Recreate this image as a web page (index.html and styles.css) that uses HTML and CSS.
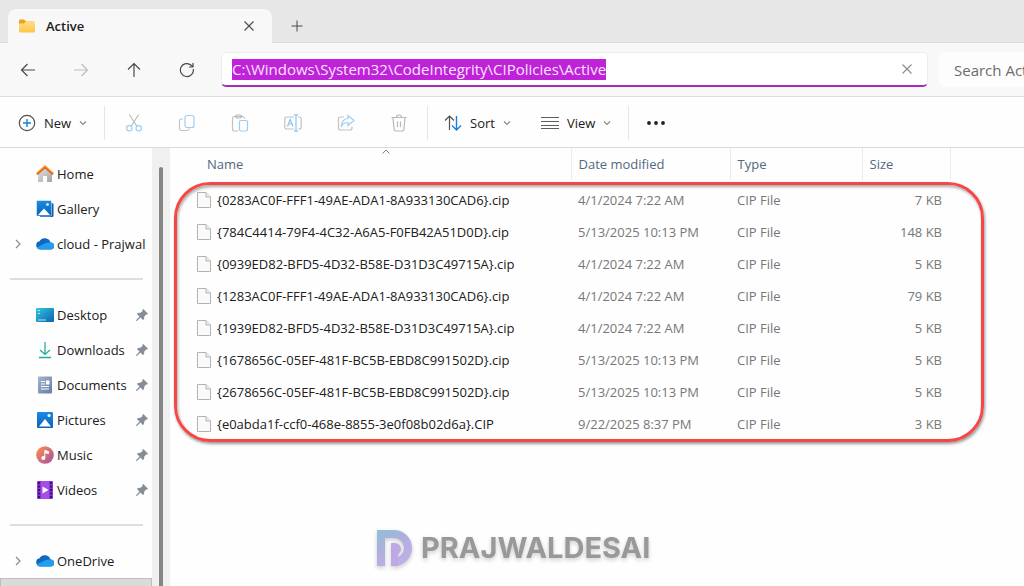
FILE: index.html
```html
<!DOCTYPE html>
<html lang="en">
<head>
<meta charset="utf-8">
<title>Active</title>
<link rel="stylesheet" href="styles.css">
</head>
<body>
<svg class="defs" aria-hidden="true">
  <defs>
    <linearGradient id="cloudA" x1="0" y1="0" x2="1" y2="1"><stop offset="0" stop-color="#0d5bb5"/><stop offset="1" stop-color="#1580d8"/></linearGradient>
    <linearGradient id="pic" x1="0" y1="0" x2="0" y2="1"><stop offset="0" stop-color="#1a8be6"/><stop offset="1" stop-color="#0a62b8"/></linearGradient>
    <linearGradient id="desk" x1="0" y1="0" x2="1" y2="1"><stop offset="0" stop-color="#35c6dc"/><stop offset="1" stop-color="#0b62b4"/></linearGradient>
    <linearGradient id="doc" x1="0" y1="0" x2="1" y2="1"><stop offset="0" stop-color="#a3b5cf"/><stop offset="1" stop-color="#647ca3"/></linearGradient>
    <linearGradient id="mus" x1="0" y1="0" x2="1" y2="1"><stop offset="0.2" stop-color="#ee8457"/><stop offset="1" stop-color="#a64fa8"/></linearGradient>
    <linearGradient id="house" x1="0" y1="0" x2="1" y2="1"><stop offset="0" stop-color="#e6e6e6"/><stop offset="1" stop-color="#a2a2a2"/></linearGradient>
    <linearGradient id="fold" x1="0" y1="0" x2="0" y2="1"><stop offset="0" stop-color="#ffdf83"/><stop offset="1" stop-color="#fcc648"/></linearGradient>
    <linearGradient id="brand" x1="0" y1="0" x2="0.6" y2="1"><stop offset="0" stop-color="#8fc0d6"/><stop offset="0.5" stop-color="#b0aedd"/><stop offset="1" stop-color="#c2aeea"/></linearGradient>
  </defs>
  <symbol id="i-chev" viewBox="0 0 8 8"><path d="M1 2.5 4 5.5 7 2.5" fill="none" stroke="#8a8a8a"/></symbol>
  <symbol id="i-x" viewBox="0 0 12 12"><path d="M1.500 1.500 10.500 10.500M10.500 1.500 1.500 10.500" fill="none" stroke="currentColor" stroke-width="1.100"/></symbol>
  <symbol id="i-right" viewBox="0 0 8 10"><path d="M2 1 6 5 2 9" fill="none" stroke="#8c8c8c" stroke-width="1.200"/></symbol>
  <symbol id="i-cloud" viewBox="0 0 18 18"><path d="M4.500 14.500A4.200 4.200 0 0 1 3.500 6.200 6 6 0 0 1 14.500 7.500 3.500 3.500 0 0 1 15 14.500Z" fill="url(#cloudA)"/><path d="M.8 12.500 9.500 8.300Q12 7.300 14.500 7.500A3.500 3.500 0 0 1 14.800 14.500H4.500Q2 14.500 .8 12.500Z" fill="#259ded"/></symbol>
  <symbol id="i-pin" viewBox="0 0 12 12"><path d="M7.300 0 12 4.700 11.200 5.600 10.100 5.500 8.300 7.500 8 10.200 6.900 11 4.500 8.500 1.100 11.800 0 12 .2 10.900 3.500 7.500 1 5 1.800 3.900 4.500 3.700 6.500 1.900 6.400 .8Z" fill="#858e97"/></symbol>
  <symbol id="i-file" viewBox="0 0 14 18"><path d="M.5 1.500H9L13.500 6V16.500H.5Z" fill="#fafafa" stroke="#b2b2b2"/><path d="M9 1.500V6H13.500" fill="#eee" stroke="#b2b2b2"/></symbol>
</svg>

<div class="window">
  <header class="tabs">
    <div class="tab">
      <svg class="tab-icon" viewBox="0 0 18 14"><path d="M1 2Q1 .5 2 .5H6L8 2.500H15V6H1Z" fill="#f0a11c"/><path d="M1 4.500H6L8 2.500H16Q17 2.500 17 3.500V12.500Q17 13.500 16 13.500H2Q1 13.500 1 12.500Z" fill="url(#fold)"/></svg>
      <span class="tab-title">Active</span>
      <button class="plain" aria-label="Close tab"><svg class="s12"><use href="#i-x"/></svg></button>
    </div>
    <button class="plain add" aria-label="New tab"><svg class="s12" viewBox="0 0 12 12"><path d="M6 .5V11.500M.5 6H11.500" stroke="#4a4a4a" fill="none"/></svg></button>
  </header>

  <nav class="navbar">
    <div class="nav-buttons">
      <button class="plain" aria-label="Back"><svg class="s16" viewBox="0 0 16 16"><path d="M15 8H1.500M7.500 2 1.500 8 7.500 14"/></svg></button>
      <button class="plain" aria-label="Forward" disabled><svg class="s16" viewBox="0 0 16 16"><path d="M1 8H14.500M8.500 2 14.500 8 8.500 14"/></svg></button>
      <button class="plain" aria-label="Up"><svg class="s16" viewBox="0 0 16 16"><path d="M8 15V1.500M2 7.500 8 1.500 14 7.500"/></svg></button>
      <button class="plain" aria-label="Refresh"><svg class="s16" viewBox="0 0 16 16"><path d="M14.300 7A6.500 6.500 0 1 1 12.200 3.200L14 5M14 1V5H10"/></svg></button>
    </div>
    <div class="address">
      <input class="path" type="text" aria-label="Address" value="C:\Windows\System32\CodeIntegrity\CIPolicies\Active">
      <button class="plain clear" aria-label="Clear"><svg class="s12"><use href="#i-x"/></svg></button>
    </div>
    <input class="search" type="text" aria-label="Search" placeholder="Search Active">
  </nav>

  <div class="toolbar">
    <button class="tool new"><svg class="s18" viewBox="0 0 18 18"><circle cx="9" cy="9" r="7.700" stroke="#505050"/><path d="M9 5V13M5 9H13" stroke="#1780d6" stroke-width="1.400"/></svg>New<svg class="s8"><use href="#i-chev"/></svg></button>
    <div class="icon-tools">
      <button class="plain" aria-label="Cut"><svg class="s18" viewBox="0 0 18 18"><path d="M4.300.5 12 12.500M13.700.5 6 12.500" stroke="#bcbcbc"/><circle cx="4.300" cy="14.300" r="2.700" stroke="#9ccdf2"/><circle cx="13.700" cy="14.300" r="2.700" stroke="#9ccdf2"/></svg></button>
      <button class="plain" aria-label="Copy"><svg class="s18" viewBox="0 0 18 18"><path d="M5 5H3.500Q1.500 5 1.500 7V14Q1.500 16.500 4 16.500H9Q11 16.500 11.500 14.500" stroke="#c6c6c6"/><rect x="7" y="1.500" width="9" height="12" rx="2" stroke="#9ccdf2"/></svg></button>
      <button class="plain" aria-label="Paste"><svg class="s18" viewBox="0 0 18 18"><path d="M7 17H3.500Q1.500 17 1.500 15V4Q1.500 2.500 3.500 2.500H11.500Q13.500 2.500 13.500 4.500" stroke="#c2c2c2"/><rect x="4.500" y="1" width="6" height="3" rx="1.500" stroke="#b5b5b5"/><rect x="8.500" y="6.500" width="8" height="10.500" rx="1.500" stroke="#9ccdf2"/></svg></button>
      <button class="plain" aria-label="Rename"><svg class="s18" viewBox="0 0 18 18"><path d="M10 15H3Q.8 15 .8 13V5Q.8 3 3 3H10M14 3H15Q17.200 3 17.200 5V13Q17.200 15 15 15H14" stroke="#c2c2c2"/><path d="M12 .8V17.200M10 .8H14M10 17.200H14M3.500 12.500 6.200 5.500 9 12.500M4.500 10H8" stroke="#8fc4ee"/></svg></button>
      <button class="plain" aria-label="Share"><svg class="s18" viewBox="0 0 18 18"><path d="M7 3H3.500Q1.500 3 1.500 5V14Q1.500 16 3.500 16H13Q15 16 15 14V12.500" stroke="#c2c2c2"/><path d="M11 1.500 17 6.500 11 11.500V8.500Q7 8.500 4.500 12Q5 5 11 4.500Z" stroke="#9ccdf2"/></svg></button>
      <button class="plain" aria-label="Delete"><svg class="s18" viewBox="0 0 18 18"><path d="M1.500 3.500H16.500M6.500 3Q6.500 1 9 1T11.500 3M3 3.500 4 15Q4.200 17 6 17H12Q13.800 17 14 15L15 3.500M7.500 7.500V13M10.500 7.500V13" stroke="#b8b8b8"/></svg></button>
    </div>
    <div class="view-tools">
      <button class="tool"><svg class="s18" viewBox="0 0 18 18"><path d="M5.500 16V2M1 6.500 5.500 2 10 6.500" stroke="#505050"/><path d="M12.500 2V16M8 11.500 12.500 16 17 11.500" stroke="#1780d6" stroke-width="1.400"/></svg>Sort<svg class="s8"><use href="#i-chev"/></svg></button>
      <button class="tool"><svg class="s18" viewBox="0 0 18 18"><path d="M0 3.500H18M0 7.500H18M0 11.500H18M0 14.500H18" stroke="#5c5c5c"/></svg>View<svg class="s8"><use href="#i-chev"/></svg></button>
    </div>
    <button class="plain more" aria-label="See more"><svg class="s18" viewBox="0 0 18 18"><g fill="#222"><circle cx="2" cy="9" r="1.900"/><circle cx="9" cy="9" r="1.900"/><circle cx="16" cy="9" r="1.900"/></g></svg></button>
  </div>

  <div class="body">
    <aside class="side">
      <div class="side-list">
        <a class="item" href="#"><span></span><svg class="s18" viewBox="0 0 18 18"><path d="M2 8.500 9 2.500 16 8.500V17H11V11H7V17H2Z" fill="url(#house)"/><path d="M.8 9 9 1.500 17.200 9" fill="none" stroke="#f5a623" stroke-width="2.400"/><path d="M1.200 9.600 9 2.600 16.800 9.600" fill="none" stroke="#e4502c" stroke-width="1.300"/></svg>Home</a>
        <a class="item" href="#"><span></span><svg class="s18" viewBox="0 0 18 18"><path d="M4 3H16Q17.500 3 17.500 4.500V15.500Q17.500 17 16 17H4Z" fill="#0b5cad"/><rect x=".5" y=".5" width="15" height="15.500" rx="1" fill="url(#pic)" stroke="#fff" stroke-width=".5"/><path d="M2 15 8 8.500 14 15Z" fill="#fff"/><circle cx="11.500" cy="4.500" r="1.300" fill="#fff"/></svg>Gallery</a>
        <a class="item" href="#"><svg class="arrow"><use href="#i-right"/></svg><svg class="s18"><use href="#i-cloud"/></svg>cloud - Prajwal</a>
        <hr>
        <a class="item" href="#"><span></span><svg class="s18" viewBox="0 0 18 18"><rect y="2" width="18" height="14" rx="1" fill="url(#desk)"/><path d="M2 4.500H4M2 7.500H4M2 14H10" stroke="#a6eef5"/></svg>Desktop<svg class="pin"><use href="#i-pin"/></svg></a>
        <a class="item" href="#"><span></span><svg class="s18" viewBox="0 0 18 18"><path d="M9 1V13.500M4 9 9 13.500 14 9M3 16.500H15" fill="none" stroke="#24ac94" stroke-width="1.300"/></svg>Downloads<svg class="pin"><use href="#i-pin"/></svg></a>
        <a class="item" href="#"><span></span><svg class="s18" viewBox="0 0 18 18"><rect x="2" y=".5" width="14" height="17" rx="1" fill="url(#doc)"/><path d="M5 5.500H9M5 8H9M5 10.500H13M5 13H13" stroke="#fff"/><rect x="10" y="4.500" width="3.500" height="4" fill="#fff"/></svg>Documents<svg class="pin"><use href="#i-pin"/></svg></a>
        <a class="item" href="#"><span></span><svg class="s18" viewBox="0 0 18 18"><rect x="1" y="1" width="16" height="16" rx="1" fill="url(#pic)"/><path d="M3 15.500 9 8 15 15.500Z" fill="#fff"/><circle cx="13" cy="4.500" r="1.500" fill="#fff"/></svg>Pictures<svg class="pin"><use href="#i-pin"/></svg></a>
        <a class="item" href="#"><span></span><svg class="s18" viewBox="0 0 18 18"><circle cx="9" cy="9" r="8.800" fill="url(#mus)"/><circle cx="7.300" cy="12" r="2" fill="#fff"/><path d="M8.800 12V4.500L12.500 5.500V7.500L9 6.700" fill="#fff" stroke="#fff"/></svg>Music<svg class="pin"><use href="#i-pin"/></svg></a>
        <a class="item" href="#"><span></span><svg class="s18" viewBox="0 0 18 18"><rect x="1" width="16" height="18" rx="1" fill="#8b35d6"/><path d="M3 1V18M15 1V18" stroke="#38146b" stroke-width="2" stroke-dasharray="2 1.500"/><rect x="5" width="8" height="18" fill="#a44fe8"/><path d="M6.500 5.500 12.500 9 6.500 12.500Z" fill="#fff"/></svg>Videos<svg class="pin"><use href="#i-pin"/></svg></a>
        <hr>
        <a class="item" href="#"><svg class="arrow"><use href="#i-right"/></svg><svg class="s18"><use href="#i-cloud"/></svg>OneDrive</a>
        <div class="side-foot"></div>
      </div>
      <div class="gutter"><div class="thumb"></div></div>
    </aside>

    <main class="main">
      <div class="list">
        <table>
          <colgroup><col class="c-name"><col class="c-date"><col class="c-type"><col class="c-size"></colgroup>
          <thead><tr><th class="name">Name<svg class="sorted" viewBox="0 0 8 5"><path d="M.5 4.500 4 1 7.500 4.500" fill="none" stroke="#808080"/></svg></th><th>Date modified</th><th>Type</th><th>Size</th></tr></thead>
          <tbody>
            <tr><td class="name"><div class="file"><svg><use href="#i-file"/></svg>{0283AC0F-FFF1-49AE-ADA1-8A933130CAD6}.cip</div></td><td>4/1/2024 7:22 AM</td><td>CIP File</td><td class="size">7 KB</td></tr>
            <tr><td class="name"><div class="file"><svg><use href="#i-file"/></svg>{784C4414-79F4-4C32-A6A5-F0FB42A51D0D}.cip</div></td><td>5/13/2025 10:13 PM</td><td>CIP File</td><td class="size">148 KB</td></tr>
            <tr><td class="name"><div class="file"><svg><use href="#i-file"/></svg>{0939ED82-BFD5-4D32-B58E-D31D3C49715A}.cip</div></td><td>4/1/2024 7:22 AM</td><td>CIP File</td><td class="size">5 KB</td></tr>
            <tr><td class="name"><div class="file"><svg><use href="#i-file"/></svg>{1283AC0F-FFF1-49AE-ADA1-8A933130CAD6}.cip</div></td><td>4/1/2024 7:22 AM</td><td>CIP File</td><td class="size">79 KB</td></tr>
            <tr><td class="name"><div class="file"><svg><use href="#i-file"/></svg>{1939ED82-BFD5-4D32-B58E-D31D3C49715A}.cip</div></td><td>4/1/2024 7:22 AM</td><td>CIP File</td><td class="size">5 KB</td></tr>
            <tr><td class="name"><div class="file"><svg><use href="#i-file"/></svg>{1678656C-05EF-481F-BC5B-EBD8C991502D}.cip</div></td><td>5/13/2025 10:13 PM</td><td>CIP File</td><td class="size">5 KB</td></tr>
            <tr><td class="name"><div class="file"><svg><use href="#i-file"/></svg>{2678656C-05EF-481F-BC5B-EBD8C991502D}.cip</div></td><td>5/13/2025 10:13 PM</td><td>CIP File</td><td class="size">5 KB</td></tr>
            <tr><td class="name"><div class="file"><svg><use href="#i-file"/></svg>{e0abda1f-ccf0-468e-8855-3e0f08b02d6a}.CIP</div></td><td>9/22/2025 8:37 PM</td><td>CIP File</td><td class="size">3 KB</td></tr>
          </tbody>
        </table>
        <div class="highlight"></div>
      </div>
      <div class="brand">
        <svg viewBox="0 0 36 36"><path d="M0 0H17A18 18 0 0 1 17 36H14V28H17A10 10 0 0 0 17 8H8V36H0Z" fill="url(#brand)"/><path d="M14 13H18A6 6 0 0 1 18 25H14Z" fill="#bda9e3"/><path d="M14 22H21V36H14Z" fill="#bda9e3"/></svg>
        <span>PRAJWALDESAI</span>
      </div>
    </main>
  </div>
</div>
</body>
</html>
```
FILE: styles.css
```css
* { box-sizing: border-box; }
body {
  margin: 0;
  background: #fefefe;
  color: #202020;
  font-family: "Open Sans", "Noto Sans", sans-serif;
  font-size: 13px;
}
svg { flex: none; display: block; }
button, input { font: inherit; color: inherit; }
.defs { position: absolute; width: 0; height: 0; }
.window { display: flex; flex-direction: column; height: 100vh; overflow: hidden; }
.plain {
  display: flex; align-items: center; justify-content: center;
  padding: 0; border: 0; background: none; color: #4a4a4a;
}
.s8 { width: 8px; height: 8px; }
.s12 { width: 12px; height: 12px; }
.s16 { width: 16px; height: 16px; }
.s18 { width: 18px; height: 18px; }

.tabs {
  display: flex; flex: none; align-items: flex-end; height: 43px; padding-left: 8px;
  background: #e7e7e7; border-bottom: 1px solid #dcdcdc;
}
.tab {
  display: flex; align-items: center; width: 264px; height: 34px;
  margin-bottom: -1px; padding: 0 17px 0 10px;
  background: #f8f8f8; border-radius: 8px 8px 0 0;
}
.tab-icon { width: 18px; height: 14px; }
.tab-title { flex: 1; margin-left: 10px; font-weight: 600; }
.add { width: 50px; height: 32px; }

.navbar {
  display: flex; flex: none; align-items: center; height: 54px;
  background: #f8f8f8; border-bottom: 1px solid #dddddd;
}
.nav-buttons { display: flex; padding-left: 1px; width: 221px; }
.nav-buttons .plain { width: 53px; height: 32px; }
.nav-buttons svg { fill: none; stroke: #4a4a4a; stroke-width: 1.2; }
.nav-buttons :disabled svg { stroke: #bdbdbd; }
.address {
  display: flex; flex: 1; align-items: center; justify-content: space-between;
  height: 35px; padding: 0 14px 0 10px;
  background: #fff; border: 1px solid #ededed; border-bottom: 2px solid #a72bbd; border-radius: 5px;
}
.path {
  field-sizing: content; height: 21px; padding: 0; border: 0;
  background: #bf22d8; color: #fbe6ff; font-size: 15px;
}
.clear { color: #8a8a8a; }
.search {
  flex: none; width: 85px; height: 35px; margin-left: 11px; padding: 0 0 0 15px;
  border: 0; border-radius: 5px 0 0 5px; background: #fdfdfd; font-size: 15px;
}
.search::placeholder { color: #6c6c6c; }

.toolbar {
  display: flex; flex: none; align-items: center; height: 51px; padding-top: 2px;
  background: #fefefe; border-bottom: 1px solid #d9d9d9;
}
.toolbar svg { fill: none; stroke-width: 1.2; }
.tool { display: flex; align-items: center; gap: 8px; padding: 0; border: 0; background: none; }
.new { width: 104px; padding-left: 18px; }
.icon-tools, .view-tools { display: flex; align-items: center; height: 34px; border-left: 1px solid #e6e6e6; }
.icon-tools { padding: 0 2px; }
.icon-tools .plain { width: 53px; }
.view-tools { width: 202px; gap: 30px; padding-left: 16px; border-right: 1px solid #e6e6e6; }
.more { width: 53px; }

.body { display: flex; flex: 1; min-height: 0; }
.side { display: flex; flex: none; width: 171px; }
.side-list { display: flex; flex-direction: column; flex: none; width: 152px; padding-top: 8px; }
.item {
  display: grid; flex: none; grid-template-columns: 22px 18px 1fr auto; align-items: center; column-gap: 3px;
  height: 35px; padding: 0 4px 0 11px; color: inherit; text-decoration: none; white-space: nowrap;
}
.arrow { width: 8px; height: 10px; margin-left: 3px; }
.pin { width: 12px; height: 12px; }
.side hr { flex: none; width: 133px; height: 2px; margin: 17px 0 17px 10px; border: 0; background: #dedede; }
.side-foot { flex: none; height: 20px; border: 1px solid #bdbdbd; background: #dadada; }
.gutter { width: 18px; padding: 19px 7px 0; background: #f0f0f0; }
.thumb { height: 100%; border-radius: 2px 2px 0 0; background: #858585; }

.main { display: flex; flex: 1; flex-direction: column; align-items: flex-start; min-width: 0; }
.list { position: relative; }
table { width: 779px; table-layout: fixed; border-collapse: collapse; }
.c-name { width: 400px; }
.c-date { width: 159px; }
.c-type { width: 132px; }
.c-size { width: 88px; }
th {
  position: relative; height: 32px; padding: 0 0 0 7px;
  border-right: 1px solid #ececec; color: #53687f; font-weight: 400; text-align: left;
}
th.name { padding-left: 36px; }
.sorted { position: absolute; top: 1px; left: 211px; width: 8px; height: 5px; }
td { height: 32px; padding: 8px 0 0 7px; color: #777; white-space: nowrap; }
td.name { padding-left: 26px; color: #202020; }
td.size { padding-right: 8px; text-align: right; }
.file { display: flex; align-items: center; gap: 6px; }
.file svg { width: 14px; height: 18px; }
.highlight {
  position: absolute; top: 34px; left: 3px; right: -33px; bottom: -6px;
  border: 3px solid #f64747; border-radius: 36px;
  box-shadow: 1px 2px 3px #999, inset 1px 2px 3px #aaa;
  pointer-events: none;
}
.brand {
  display: flex; align-items: center; gap: 8px; margin: auto 0 20px 206px;
  color: #999; font-family: Inter, sans-serif; font-size: 29px; font-weight: 700; line-height: 36px;
  filter: drop-shadow(0 2px 2px #ccc);
}
.brand svg { width: 36px; height: 36px; }
```
